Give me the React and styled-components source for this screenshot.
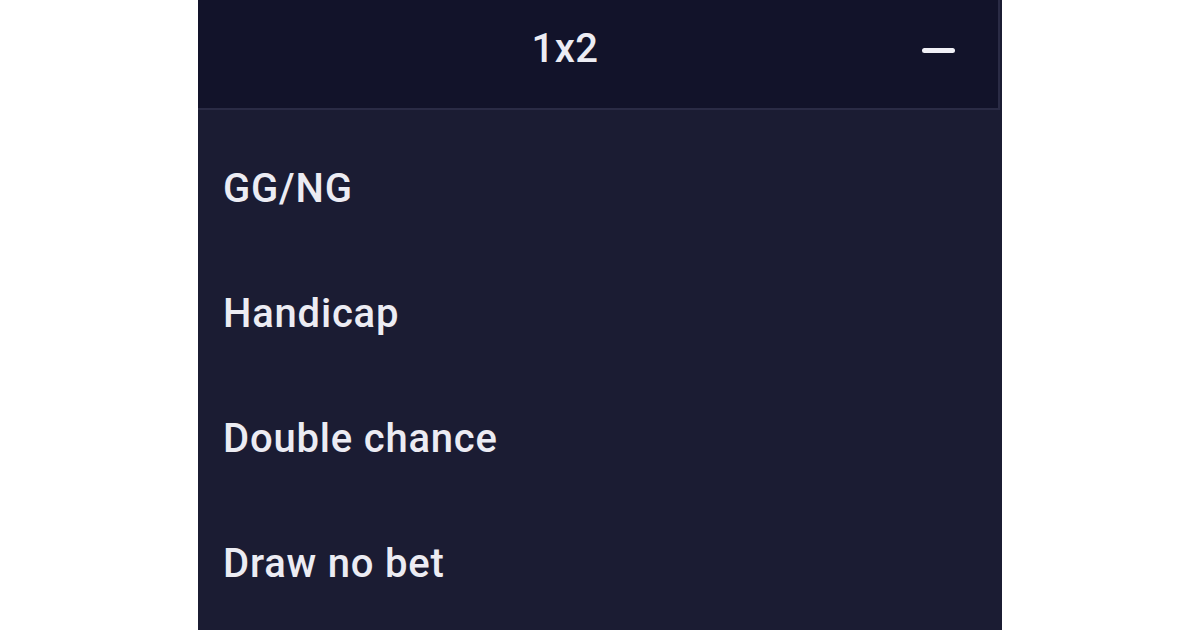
import React from "react";
import styled, { createGlobalStyle } from "styled-components";

const Global = createGlobalStyle`
  html, body { margin: 0; padding: 0; background: #ffffff; }
  body { font-family: Roboto, "Noto Sans", "Liberation Sans", sans-serif; }
`;

const Page = styled.div`
  width: 1200px;
  height: 630px;
  overflow: hidden;
  display: flex;
  justify-content: center;
  background: #ffffff;
`;

const Panel = styled.div`
  width: 804px;
  height: 630px;
  display: flex;
  flex-direction: column;
  background: #1b1c33;
`;

const Header = styled.div`
  height: 110px;
  flex-shrink: 0;
  box-sizing: border-box;
  margin-right: 2px;
  border-right: 2px solid #2a2b45;
  border-bottom: 2px solid #2a2b45;
  background: #12132a;
  display: flex;
  align-items: center;
  padding: 0 43px 12px 0;
`;

const Title = styled.div`
  flex: 1;
  margin-right: -10px;
  text-align: center;
  color: #ececf3;
  font-size: 40px;
  font-weight: 500;
  letter-spacing: 0.5px;
`;

const Collapse = styled.span`
  display: block;
  width: 33px;
  height: 5px;
  border-radius: 3px;
  background: #f0f0f6;
  margin-top: 4px;
`;

const List = styled.div`
  display: flex;
  flex-direction: column;
  padding: 16px 0 0 25px;
`;

const Item = styled.div`
  height: 125px;
  line-height: 125px;
  color: #ececf3;
  font-size: 40px;
  font-weight: 500;
  letter-spacing: 0.8px;
  white-space: nowrap;
`;

const items = ["GG/NG", "Handicap", "Double chance", "Draw no bet"];

export default function App() {
  return (
    <Page>
      <Global />
      <Panel>
        <Header>
          <Title>1x2</Title>
          <Collapse />
        </Header>
        <List>
          {items.map((t) => (
            <Item key={t}>{t}</Item>
          ))}
        </List>
      </Panel>
    </Page>
  );
}
